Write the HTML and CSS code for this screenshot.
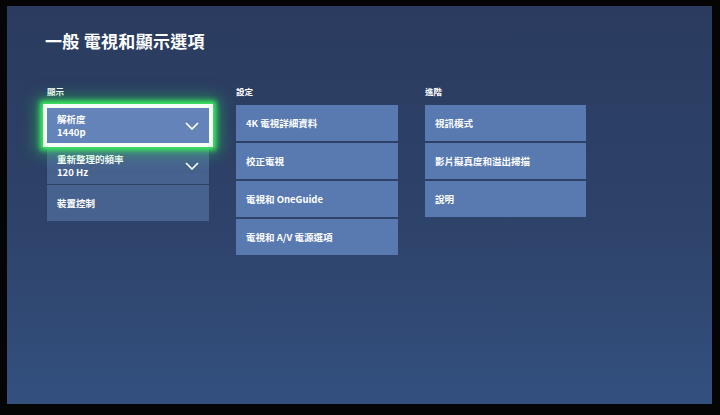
FILE: index.html
```html
<!DOCTYPE html>
<html lang="zh-Hant">
<head>
<meta charset="utf-8">
<title>電視和顯示選項</title>
<link rel="stylesheet" href="styles.css">
</head>
<body>
<div class="screen">
  <h1 class="title">一般&nbsp;電視和顯示選項</h1>
  <div class="columns">
    <section class="col col-display">
      <h2 class="col-head">顯示</h2>
      <div class="tiles">
        <div class="tile tile-dim tile-focus">
          <div class="tile-text"><span>解析度</span><span>1440p</span></div>
          <svg class="chev" viewBox="0 0 14 8" width="14" height="8"><path d="M1 1 L7 7 L13 1" fill="none" stroke="#fff" stroke-width="1.7"/></svg>
        </div>
        <div class="tile tile-dim">
          <div class="tile-text"><span>重新整理的頻率</span><span>120 Hz</span></div>
          <svg class="chev" viewBox="0 0 14 8" width="14" height="8"><path d="M1 1 L7 7 L13 1" fill="none" stroke="#fff" stroke-width="1.7"/></svg>
        </div>
        <div class="tile tile-dim">
          <div class="tile-text"><span>裝置控制</span></div>
        </div>
      </div>
    </section>
    <section class="col">
      <h2 class="col-head">設定</h2>
      <div class="tiles">
        <div class="tile"><div class="tile-text"><span>4K 電視詳細資料</span></div></div>
        <div class="tile"><div class="tile-text"><span>校正電視</span></div></div>
        <div class="tile"><div class="tile-text"><span>電視和 OneGuide</span></div></div>
        <div class="tile"><div class="tile-text"><span>電視和 A/V 電源選項</span></div></div>
      </div>
    </section>
    <section class="col">
      <h2 class="col-head">進階</h2>
      <div class="tiles">
        <div class="tile"><div class="tile-text"><span>視訊模式</span></div></div>
        <div class="tile"><div class="tile-text"><span>影片擬真度和溢出掃描</span></div></div>
        <div class="tile"><div class="tile-text"><span>說明</span></div></div>
      </div>
    </section>
  </div>
</div>
</body>
</html>
```
FILE: styles.css
```css
html, body {
  margin: 0;
  padding: 0;
  background: #050506;
}
body {
  width: 720px;
  height: 415px;
  padding: 6px 8px 11px 7px;
  box-sizing: border-box;
  font-family: "Noto Sans CJK TC", "Noto Sans", sans-serif;
  color: #fff;
  overflow: hidden;
}
.screen {
  width: 705px;
  height: 398px;
  box-sizing: border-box;
  padding: 24px 0 0 40px;
  background: linear-gradient(180deg, #2a3b5f 0%, #2e4369 55%, #33507f 100%);
}
.title {
  margin: 0 0 0 -2px;
  font-size: 17px;
  font-weight: 700;
  line-height: 22px;
  letter-spacing: 0.3px;
}
.columns {
  display: grid;
  grid-template-columns: 162px 162px 161px;
  column-gap: 27px;
  margin-top: 34px;
}
.col-head {
  margin: 0 0 8px 0;
  font-size: 8.5px;
  font-weight: 700;
  line-height: 11px;
  height: 11px;
}
.tiles {
  display: flex;
  flex-direction: column;
  gap: 2px;
}
.tile {
  height: 36px;
  box-sizing: border-box;
  background: #587ab1;
  display: flex;
  align-items: center;
  justify-content: space-between;
  padding: 0 9px 0 10px;
  font-size: 9.5px;
  font-weight: 700;
  line-height: 13px;
}
.tile-text {
  display: flex;
  flex-direction: column;
}
.tile-dim {
  background: #48628f;
}
.tile-focus {
  background: #6383b9;
  margin: 3px 0 4px 0;
  height: 35px;
  box-shadow: 0 0 0 4px #f4fff6, 0 0 5px 7px #3cf060, 0 0 14px 10px rgba(40, 220, 80, 0.5);
  position: relative;
  z-index: 1;
}
.col-display .tiles {
  gap: 0;
}
.col-display .tile + .tile:not(.tile-focus) {
  margin-top: 1px;
}
.col-display .tile-focus + .tile {
  margin-top: 0;
}
.chev {
  display: block;
  margin-right: 1px;
}
```
